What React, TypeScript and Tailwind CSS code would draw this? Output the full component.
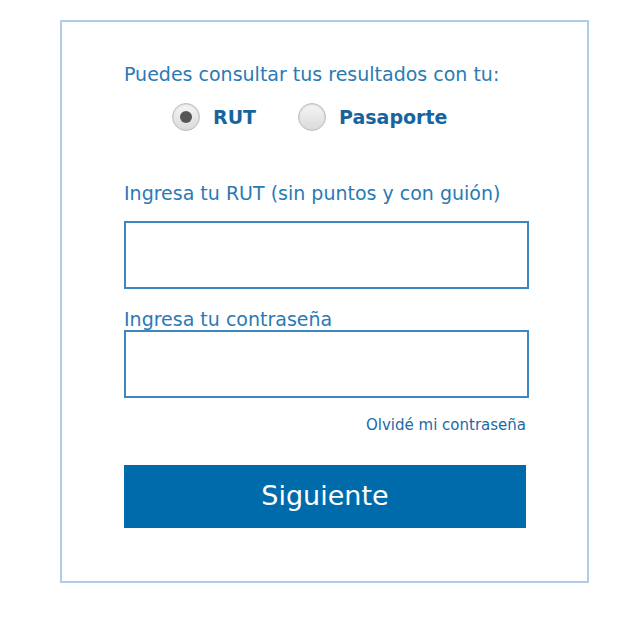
import React, { useState } from 'react';

const FONT = "font-['DejaVu_Sans',Verdana,sans-serif]";

export default function App() {
  const [docType, setDocType] = useState<'rut' | 'pasaporte'>('rut');
  const [rut, setRut] = useState('');
  const [password, setPassword] = useState('');

  const Radio = ({ value, label }: { value: 'rut' | 'pasaporte'; label: string }) => (
    <label className="flex items-center gap-[13px] cursor-pointer" onClick={() => setDocType(value)}>
      <span className="flex h-[28px] w-[28px] items-center justify-center rounded-full border border-[#bdbdbd] bg-gradient-to-b from-[#f6f6f6] to-[#dadada] shadow-[inset_0_1px_2px_rgba(0,0,0,0.12)]">
        {docType === value && <span className="h-[12px] w-[12px] rounded-full bg-[#555]" />}
      </span>
      <span className="text-[19px] font-bold text-[#16649e]">{label}</span>
    </label>
  );

  return (
    <div className={`h-[623px] w-[640px] bg-white pt-[20px] pl-[60px] ${FONT}`}>
      <div className="flex h-[563px] w-[529px] flex-col border-2 border-[#b0cde8] pl-[62px] pt-[39px]">
        <p className="text-[19px] leading-[26px] text-[#2a7ab4]">Puedes consultar tus resultados con tu:</p>

        {/* tipo de documento */}
        <div className="mt-[16px] flex items-center gap-[42px] pl-[48px]">
          <Radio value="rut" label="RUT" />
          <Radio value="pasaporte" label="Pasaporte" />
        </div>

        <label className="mt-[48px] text-[19px] leading-[26px] text-[#2a7ab4]">Ingresa tu RUT (sin puntos y con guión)</label>
        <input
          type="text"
          value={rut}
          onChange={(e) => setRut(e.target.value)}
          className="mt-[15px] h-[68px] w-[405px] border-2 border-[#3c86c1] px-3 text-[18px] outline-none"
        />

        <label className="mt-[17px] text-[19px] leading-[26px] text-[#2a7ab4]">Ingresa tu contraseña</label>
        <input
          type="password"
          value={password}
          onChange={(e) => setPassword(e.target.value)}
          className="mt-[-2px] h-[68px] w-[405px] border-2 border-[#3c86c1] px-3 text-[18px] outline-none"
        />

        <div className="mt-[15px] w-[402px] text-right">
          <a className="text-[15px] leading-[20px] text-[#1c6aa6]" href="#">Olvidé mi contraseña</a>
        </div>

        <button className="mt-[28px] h-[63px] w-[402px] bg-[#006bab] text-[27px] text-white">Siguiente</button>
      </div>
    </div>
  );
}
